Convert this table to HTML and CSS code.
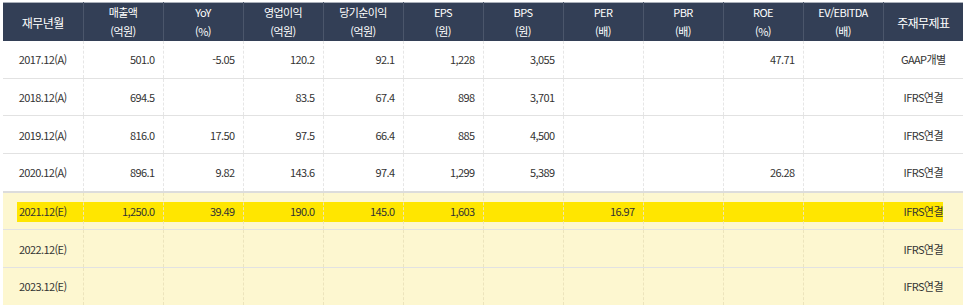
FILE: index.html
```html
<!DOCTYPE html>
<html lang="ko">
<head>
    <meta charset="UTF-8">
    <title>재무정보</title>
    <link rel="stylesheet" href="styles.css">
</head>
<body>
    <table class="fin-table">
        <thead>
            <tr>
                <th>재무년월</th>
                <th>매출액<br>(억원)</th>
                <th>YoY<br>(%)</th>
                <th>영업이익<br>(억원)</th>
                <th>당기순이익<br>(억원)</th>
                <th>EPS<br>(원)</th>
                <th>BPS<br>(원)</th>
                <th>PER<br>(배)</th>
                <th>PBR<br>(배)</th>
                <th>ROE<br>(%)</th>
                <th>EV/EBITDA<br>(배)</th>
                <th>주재무제표</th>
            </tr>
        </thead>
        <tbody>
            <tr>
                <td>2017.12(A)</td><td>501.0</td><td>-5.05</td><td>120.2</td><td>92.1</td><td>1,228</td><td>3,055</td><td></td><td></td><td>47.71</td><td></td><td>GAAP개별</td>
            </tr>
            <tr>
                <td>2018.12(A)</td><td>694.5</td><td></td><td>83.5</td><td>67.4</td><td>898</td><td>3,701</td><td></td><td></td><td></td><td></td><td>IFRS연결</td>
            </tr>
            <tr>
                <td>2019.12(A)</td><td>816.0</td><td>17.50</td><td>97.5</td><td>66.4</td><td>885</td><td>4,500</td><td></td><td></td><td></td><td></td><td>IFRS연결</td>
            </tr>
            <tr>
                <td>2020.12(A)</td><td>896.1</td><td>9.82</td><td>143.6</td><td>97.4</td><td>1,299</td><td>5,389</td><td></td><td></td><td>26.28</td><td></td><td>IFRS연결</td>
            </tr>
            <tr class="est first-est hl">
                <td>2021.12(E)</td><td>1,250.0</td><td>39.49</td><td>190.0</td><td>145.0</td><td>1,603</td><td></td><td>16.97</td><td></td><td></td><td></td><td>IFRS연결</td>
            </tr>
            <tr class="est">
                <td>2022.12(E)</td><td></td><td></td><td></td><td></td><td></td><td></td><td></td><td></td><td></td><td></td><td>IFRS연결</td>
            </tr>
            <tr class="est">
                <td>2023.12(E)</td><td></td><td></td><td></td><td></td><td></td><td></td><td></td><td></td><td></td><td></td><td>IFRS연결</td>
            </tr>
        </tbody>
    </table>
</body>
</html>
```

FILE: styles.css
```css
body {
    margin: 0;
    padding: 0;
    background-color: #fff;
    font-family: "Noto Sans CJK KR", "Noto Sans", sans-serif;
}

/* Table */
.fin-table {
    width: 960px;
    margin: 2px 3px 0;
    border-collapse: collapse;
    table-layout: fixed;
    font-size: 11px;
    letter-spacing: -0.6px;
    color: #333;
    border-top: 1px solid #aab0ba;
    border-bottom: 1px solid #777;
}

.fin-table th {
    height: 37px;
    padding: 0;
    background-color: #333f56;
    color: #fff;
    font-weight: normal;
    line-height: 19px;
    text-align: center;
    border-left: 1px solid #4b566b;
}

.fin-table th:first-child {
    border-left: none;
    font-size: 12px;
}

.fin-table th:last-child {
    font-size: 12px;
}

.fin-table td {
    height: 36.7px;
    padding: 0 8px 0 0;
    text-align: right;
    border-bottom: 1px solid #e2e2e2;
    border-left: 1px dashed #e6e6e6;
}

.fin-table td:first-child,
.fin-table td:last-child {
    padding: 0;
    text-align: center;
}

.fin-table td:first-child {
    border-left: none;
}

/* Estimate rows */
.fin-table .est td {
    background-color: #fdf7d0;
    border-left-color: #ece4bc;
}

.fin-table .first-est td {
    border-top: 2px solid #dcdcdc;
}

.fin-table tr:last-child td {
    border-bottom: none;
}

/* Highlight band */
.fin-table .hl td {
    background-image: linear-gradient(#ffe600, #ffe600);
    background-repeat: no-repeat;
    background-origin: border-box;
    background-clip: border-box;
    background-size: 100% 20px;
    background-position: left 10px;
}

.fin-table .hl td:first-child {
    background-size: 66px 20px;
    background-position: right 10px;
}

.fin-table .hl td:last-child {
    background-size: 60px 20px;
    background-position: left 10px;
}
```
